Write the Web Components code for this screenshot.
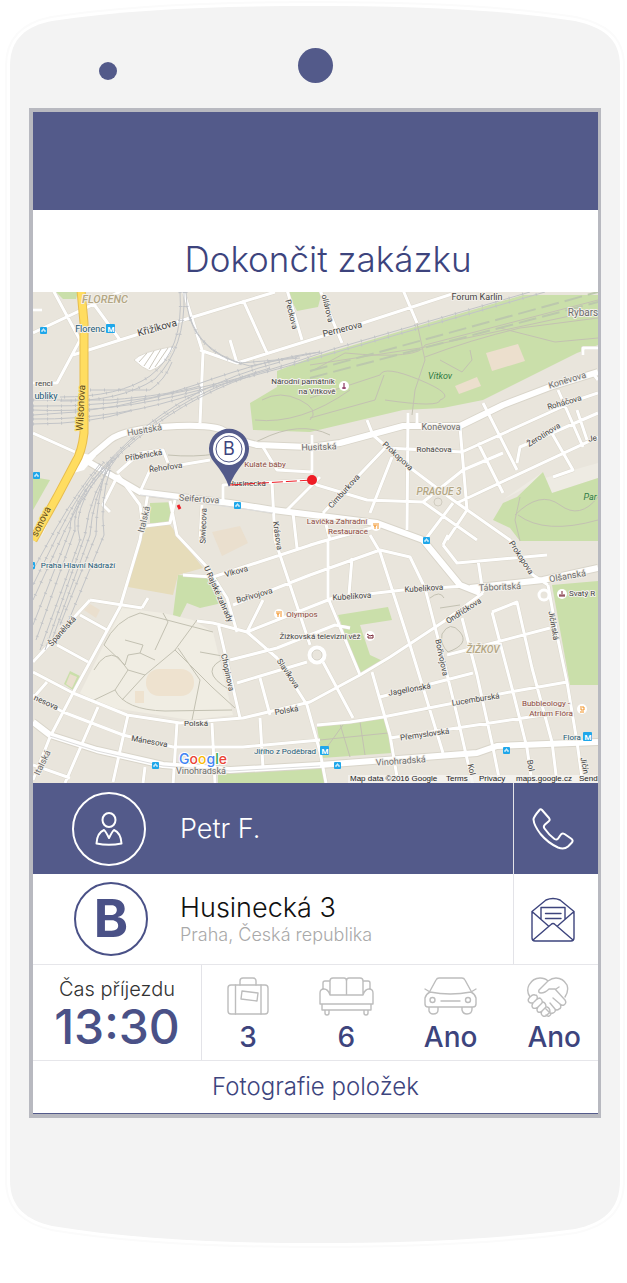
<!DOCTYPE html>
<html lang="cs">
<head>
<meta charset="utf-8">
<meta name="viewport" content="width=device-width, initial-scale=1">
<title>Dokončit zakázku</title>
<style>
  body { margin: 0; background: #fff; font-family: Inter, "Liberation Sans", sans-serif; }
</style>
</head>
<body>
<phone-frame>
  <order-screen></order-screen>
</phone-frame>

<script>
const define = (name, html, setup) => {
  const tpl = document.createElement('template');
  tpl.innerHTML = html;
  customElements.define(name, class extends HTMLElement {
    constructor() {
      super();
      this.attachShadow({ mode: 'open' }).append(tpl.content.cloneNode(true));
    }
    connectedCallback() { if (setup) setup(this, this.shadowRoot); }
  });
};

/* Handset body with sensor, camera and the bezel round the slotted screen */
define('phone-frame', `
<style>
  :host { display: grid; --ink: #535a8a; }
  .shell { grid-area: 1 / 1; width: 100%; height: 0; min-height: 100%; display: block; }
  .device { grid-area: 1 / 1; display: grid; grid-template-rows: 108px auto 165px; padding: 0 26px 0 29px; }
  .top { display: grid; grid-template-columns: 1fr auto 1fr; align-items: start; padding-top: 48px; }
  .sensor { width: 18px; height: 18px; margin: 14px 0 0 70px; border-radius: 50%; background: var(--ink); }
  .camera { width: 35px; height: 35px; border-radius: 50%; background: var(--ink); }
  .bezel { border: 4px solid #b8b9c0; border-right-width: 3px; background: #fff; }
</style>
<svg class="shell" viewBox="0 0 627 1283" preserveAspectRatio="none" aria-hidden="true">
  <path d="M10 66C10 38 27 26 52 21C130 9 220 6 314 6C408 6 500 9 575 21C602 27 620 38 620 66V1180C620 1210 603 1223 575 1229C500 1239 408 1243 314 1243C220 1243 130 1239 52 1226C27 1220 10 1208 10 1180Z" fill="#f3f3f3" stroke="#fbfbfb" stroke-width="10"/>
  <path d="M10 66C10 38 27 26 52 21C130 9 220 6 314 6C408 6 500 9 575 21C602 27 620 38 620 66V1180C620 1210 603 1223 575 1229C500 1239 408 1243 314 1243C220 1243 130 1239 52 1226C27 1220 10 1208 10 1180Z" fill="#f3f3f3" stroke="#fff" stroke-width="6"/>
  <path d="M10 66C10 38 27 26 52 21C130 9 220 6 314 6C408 6 500 9 575 21C602 27 620 38 620 66V1180C620 1210 603 1223 575 1229C500 1239 408 1243 314 1243C220 1243 130 1239 52 1226C27 1220 10 1208 10 1180Z" fill="#f3f3f3"/>
</svg>
<div class="device">
  <div class="top"><div class="sensor"></div><div class="camera"></div></div>
  <div class="bezel"><slot></slot></div>
</div>`);

/* Round badge on the left of a row */
define('round-badge', `
<style>
  :host { display: grid; place-items: center; box-sizing: border-box; width: 74px; height: 74px;
    border: 2px solid currentColor; border-radius: 50%; font-weight: 700; font-size: 52px; line-height: 1; }
</style><slot></slot>`);

/* Row: badge, text and an action button */
define('contact-row', `
<style>
  :host { display: grid; box-sizing: border-box; grid-template-columns: 147px 1fr 85px; align-items: center; height: 91px; border-bottom: 1px solid #e6e6ea; color: #3d447d; }
  :host([dark]) { background: #535a8a; color: #fff; border-bottom: 0; }
  ::slotted([slot=badge]) { margin-left: 40px; }
  .act { display: grid; place-items: center; align-self: stretch; padding: 0 7px 0 0; border: 0; border-left: 1px solid #e3e3e8; background: none; color: inherit; }
</style>
<slot name="badge"></slot>
<div><slot></slot></div>
<button class="act" type="button"><slot name="icon"></slot></button>`,
(host, root) => root.querySelector('button').setAttribute('aria-label', host.getAttribute('action')));

/* Icon above a value */
define('info-item', `
<style>
  :host { display: grid; grid-template-rows: 43px 34px; color: #bdbdbd; }
  .v { color: #3d447d; font-size: 28px; line-height: 34px; font-weight: 500; text-align: center; }
</style>
<slot name="icon"></slot><div class="v"><slot></slot></div>`);

const parks = [
  '277,371 310,358 523,295 598,295 598,345 577,353 543,370 483,400 443,408 403,410 310,432 253,430 250,403 277,387',
  '543,472 552,493 598,478 598,541 520,541 510,528 493,520 503,503 517,497',
  '552,585 598,581 598,685 570,685',
  '178,575 217,578 222,603 200,608 187,603 180,617 173,615',
  '338,615 388,607 392,620 360,625 370,655 385,662 360,675',
  '317,727 385,718 392,753 322,758',
  '218,772 325,767 325,783 218,783',
  '56,292 78,292 76,299 63,299', '287,292 322,292 318,307 297,311',
  '150,503 175,502 168,523 150,523', '33,477 50,480 33,510',
  '64,684 70,671 80,676 73,690'
];
const tans = [
  ['143,526 170,525 203,568 178,575 173,595 128,587', '#e6dcba'],
  ['486,353 518,344 525,361 492,371', '#ecdfcd'],
  ['455,386 477,377 481,386 459,394', '#ecdfcd'],
  ['122,608 163,613 193,620 213,632 233,715 190,720 107,707 80,693', '#f0ede3'],
  ['212,532 240,526 248,543 222,556', '#eadfce'],
  ['66,684 70,674 77,677 72,688', '#eadfce'],
  ['135,691 144,691 144,703 135,703', '#eee2cf'],
  ['84,610 90,604 100,610 96,618', '#eadfce'],
  ['504,499 543,472 552,493 598,478 598,463 545,478', '#eeebe3']
];
const rails = [
  'M33 406Q110 408 190 390T330 350L530 292', 'M33 410Q110 414 200 390T330 354L545 292', 'M33 415Q120 412 195 385T320 352',
  'M33 419Q120 420 200 392', 'M33 424Q90 424 130 411', 'M33 400H110Q170 395 200 386',
  'M180 292Q184 350 150 376Q120 397 60 397', 'M184 292Q186 348 155 379Q120 402 60 401', 'M186 292Q186 352 250 366L320 352', 'M190 317Q200 350 240 363L300 358',
  'M90 390H150Q165 380 172 362',
  'M280 362Q190 385 130 440T75 530L36 640', 'M270 368Q185 392 127 445T70 530L33 625', 'M250 376Q180 400 124 450T80 540L40 650',
  'M122 452Q90 480 65 530L33 600', 'M118 456Q90 490 85 535L45 650', 'M112 460Q92 500 90 535L52 640', 'M108 462Q96 500 96 535L60 625',
  'M104 462Q80 490 60 530L33 585', 'M100 464Q78 490 55 530L33 570', 'M110 470Q100 500 104 535L68 622'
];
const paths = [
  'M310 372L345 353Q420 360 425 345L598 300', 'M310 365L420 348L598 310', 'M417 323L425 360L415 390L412 415', 'M425 357Q470 340 520 328L598 318',
  'M500 328L555 342L598 338', 'M310 398L380 375Q384 365 420 380T440 400Q440 408 385 400', 'M310 418L375 400L384 375', 'M255 420Q300 425 350 390',
  'M440 360L462 372L472 360L470 350', 'M262 400Q280 390 300 400T310 420', 'M168 455Q220 460 260 440T330 435',
  'M520 497L515 520L520 541', 'M515 515Q540 490 560 505T598 497', 'M518 515Q545 535 598 520',
  'M104 645Q115 620 140 613L213 632', 'M104 645L125 665L128 655L140 653L143 645L125 640', 'M163 613L168 622L155 650', 'M94 670Q105 650 118 657L128 670L115 690L90 702',
  'M128 670L145 675L175 650L197 620', 'M115 690Q125 710 165 711L232 710', 'M145 675L122 700', 'M175 650L212 687L235 708', 'M178 648L200 680L192 720', 'M200 652L228 657Q195 670 230 690', 'M140 653L155 660',
  'M320 757L345 722M350 757L340 724M365 755L360 722M320 740L388 733', 'M442 634Q450 620 460 632T448 652Q440 645 442 634', 'M460 605L440 608M444 598Q440 590 430 598'
];
const minor = [
  'M148 493L140 540L120 607L73 693L50 737L33 780', 'M33 695L63 712L123 735L173 747H243L320 740', 'M170 501L177 535L207 567L227 598L237 632',
  'M183 575L213 577L320 542L375 527', 'M233 605L310 575L380 550L410 557L425 588L443 658L457 715L473 785',
  'M197 621L213 623L247 632L333 598L403 590L465 586', 'M247 632L277 658L307 705L320 752L326 783', 'M218 623L240 718', 'M272 482L275 540L280 555L310 645',
  'M263 600L247 632', 'M230 660L277 648L335 625L350 628', 'M237 683L307 662', 'M260 678L270 715', 'M212 723L215 783', 'M177 723L173 785', 'M128 715L113 782', 'M98 707L65 783',
  'M260 718L263 768', 'M145 767L143 783', 'M142 608L148 598M90 600L142 608M90 600L33 662', 'M80 615L107 630', 'M57 645L88 662', 'M47 682L33 698',
  'M328 540V598L360 675', 'M352 558L349 594', 'M370 535L380 552L410 645L443 753', 'M478 560L483 593', 'M462 618L477 675L493 748L500 783',
  'M492 612L517 602L532 668L552 742L557 783', 'M492 612L513 692L527 748L532 783', 'M548 585L557 635L567 682L577 742L583 785', 'M372 672L390 735L398 783',
  'M380 697L473 673', 'M317 725L350 722L383 717L510 692L567 682', 'M390 738L543 715', 'M447 655L550 628', 'M323 662L353 718', 'M443 545L457 563L547 555M443 545L448 535',
  'M373 435L413 470L453 500L510 540L533 575L548 585', 'M385 448L323 513', 'M392 457L370 513', 'M408 413L407 530', 'M417 413V426', 'M460 427L467 510L447 540',
  'M387 448L462 452L577 400L598 393', 'M312 480L317 485L367 500L423 502L463 470L503 453', 'M457 503L598 437', 'M483 403L517 470', 'M478 443L503 493', 'M558 390L583 447',
  'M423 502L477 540M453 503L425 540', 'M517 463L520 447L598 413', 'M550 430L573 470L553 477', 'M367 420L373 435',
  'M200 423L203 353L183 290', 'M200 350L237 363L320 337L455 293', 'M73 355L120 340L193 317L275 292', 'M33 333L130 287', 'M230 340L237 363', 'M243 300L267 353', 'M287 290L302 340',
  'M320 290L342 343', 'M403 290L417 323', 'M93 303L120 340', 'M53 290L80 340L57 383H33', 'M117 473L140 453L163 450L168 463', 'M140 492L150 470L210 460',
  'M263 447L277 470L312 472V435', 'M287 510L320 477', 'M202 505L200 540', 'M175 500L170 523L145 526', 'M293 513L297 548', 'M223 503V485L312 480', 'M33 433L75 452',
  'M33 672L73 693', 'M577 410L587 440M598 380L592 372', 'M583 355V348H598', 'M118 475L103 505L110 512M118 475L140 505L142 520', 'M33 310H42', 'M310 545L328 540', 'M33 765L70 778',
  'M323 513L330 540'
];
const major = [
  'M90 457L110 440Q125 428 177 426T227 437L257 445L310 447L340 443L403 426H460L503 405L550 387L598 372',
  'M80 457L140 492L180 497L230 503L273 510L377 523L423 540L460 585L480 593', 'M470 588L543 580L598 568',
  'M33 722L50 735L97 750L163 765L230 770L320 765L477 753L497 746L598 742'
];
const mid = ['M483 593L443 622L390 657L360 675L310 702L243 718L180 723L127 715L73 693'];

/* text, centre x, baseline y, rotation, size, style */
const labels = [
  ['FLORENC',105,303,0,11,'d'], ['Florenc',90,332,0,9,'m'], ['Křižíkova',158,331,-16,10], ['Peckova',289,315,76,8], ['ollárova',325,309,76,8], ['Pernerova',343,332,-14,9],
  ['Forum Karlín',477,300,0,9], ['Rybars',583,316,0,10,'g'], ['Vítkov',440,379,0,9,'p'], ['renci',44,386,0,8], ['ubliky',46,399,0,9,'m'], ['Národní památník',303,384,0,8], ['na Vítkově',317,394,0,8],
  ['Wilsonova',84,408,-87,10,'y'], ['sonova',44,523,-64,10,'y'], ['Husitská',145,433,-10,9,'g'], ['Husitská',319,450,-2,9,'g'], ['Koněvova',441,430,0,9,'g'], ['Koněvova',568,383,-17,9,'g'],
  ['Roháčova',434,452,0,8], ['Roháčova',565,405,-16,8], ['Žerotínova',545,437,-32,8], ['Je',593,441,-10,8], ['Příběnická',144,458,-10,8], ['Řehořova',166,470,-8,8], ['Kulaté báby',265,467,0,8,'r'],
  ['Husinecká',247,486,0,8], ['Prokopova',396,458,43,8], ['Cimburkova',346,493,-48,8], ['PRAGUE 3',439,495,0,10,'d'], ['Seifertova',199,502,4,9,'g'], ['Italská',147,520,-76,9,'g'],
  ['Siwiecova',206,526,-88,8], ['Krásova',275,536,82,8], ['Lavička Zahradní',337,524,0,8,'r'], ['Restaurace',348,534,0,8,'r'], ['Par',590,500,0,9,'p'],
  ['Praha Hlavní Nádraží',78,568,0,8,'m'], ['Vlkova',237,574,-16,8], ['Bořivojova',255,598,-16,8], ['U Rajské zahrady',216,595,66,8], ['Olympos',302,617,0,8,'r'], ['Žižkovská televizní věž',320,639,0,8],
  ['Španělská',64,633,-48,8], ['Chopinova',225,673,78,8], ['Slavíkova',286,675,56,8], ['Polská',196,726,0,8], ['Polská',287,713,-10,8], ['Mánesova',149,744,10,8], ['nesova',45,705,24,8],
  ['Italská',45,764,-64,9,'g'], ['Vinohradská',201,774,0,9,'g'], ['Vinohradská',401,764,-4,9,'g'], ['Jiřího z Poděbrad',285,754,0,8,'m'], ['Prokopova',519,559,57,8], ['Kubelíkova',352,599,-4,8],
  ['Kubelíkova',424,591,-4,8], ['Táboritská',500,590,-3,9,'g'], ['Olšanská',568,579,-10,9,'g'], ['Svatý R',582,596,0,8], ['Ondříčkova',465,613,-33,8], ['Jičínská',551,626,80,8], ['Bořivojova',439,658,78,8],
  ['ŽIŽKOV',483,653,0,10,'d'], ['Jagellonská',410,692,-10,8], ['Lucemburská',476,702,-9,8], ['Přemyslovská',425,737,-8,8], ['Bubbleology -',546,706,0,8,'r'], ['Atrium Flóra',551,716,0,8,'r'], ['Flora',572,740,0,8,'m'],
  ['Jičín',582,766,80,8], ['Kol',469,770,78,8], ['Bol',528,766,80,8]
];
const centre = ([x, y]) => `<g transform="translate(${x} ${y})">`;
const line = (list, colour, w, dash = 'none') => `<path d="${list.join('')}" fill="none" stroke="${colour}" stroke-width="${w}" stroke-linejoin="round" stroke-dasharray="${dash}"/>`;
const metro = [[111, 329], [325, 751], [588, 737]].map(p => centre(p) + '<rect x="-5" y="-5" width="9" height="9" rx="1" fill="#1fa7ea"/><text x="0" y="3" fill="#fff" font-size="8" font-weight="700">M</text></g>').join('');
const stops = [[43, 330], [36, 475], [237, 505], [426, 540], [155, 765], [337, 765], [506, 750], [31, 565]].map(p => centre(p) + '<rect x="-3" y="-3" width="7" height="7" rx="1" fill="#1fa7ea"/><path d="M-1 2V0H2V2M0-1H1" stroke="#fff" fill="none"/></g>').join('');
const pois = [[344, 386, '#714', 'M0-3V3M-2 2H2'], [376, 526, '#f29224', 'M-2-3V0H0V-3M-1 0V3M2-3V3'], [279, 614, '#f29224', 'M-2-3V0H0V-3M-1 0V3M2-3V3'], [370, 636, '#723', 'M-3-2L0 0 3-1V2H-2V0'], [562, 594, '#723', 'M-3 2H3M0-3V2M-2 0V2M2 0V2'], [582, 709, '#f29224', 'M-2-2H2V1H-1V-1M-2 3H2']]
  .map(p => centre(p) + `<circle r="5" fill="#fff"/><path d="${p[3]}" stroke="${p[2]}" fill="none"/></g>`).join('');

define('city-map', `
<style>
  :host { display: block; background: #e9e5dc; }
  svg { display: block; width: 100%; height: auto; }
  text { font-family: Roboto, "Open Sans", sans-serif; text-anchor: middle; }
  .l { fill: #444; stroke: #f2efe9; stroke-width: 2px; paint-order: stroke; stroke-linejoin: round; }
  .d { fill: #b3a683; font-weight: 500; font-style: italic; }
  .m { fill: #1b5a78; }
  .g { fill: #6c6c6c; }
  .p { fill: #2f7a45; font-style: italic; stroke: #cadfaa; }
  .r { fill: #8c4a42; }
  .y { fill: #5f4a15; stroke: #ffe070; }
  .legal { fill: #222; text-anchor: start; font-family: "Liberation Sans", sans-serif; font-size: 8px; }
  .logo { font-family: Inter, sans-serif; font-weight: 500; font-size: 14px; stroke: #fff; stroke-width: 2px; paint-order: stroke; }
</style>
<svg viewBox="33 292 565 491" role="img" aria-label="Mapa, Husinecká 3">
  ${tans.slice(3, 4).concat(tans.slice(8)).map(t => `<polygon points="${t[0]}" fill="${t[1]}"/>`).join('')}
  ${parks.map(p => `<polygon points="${p}" fill="#cadfaa"/>`).join('')}
  ${tans.filter((t, i) => i !== 3 && i !== 8).map(t => `<polygon points="${t[0]}" fill="${t[1]}"/>`).join('')}
  <rect x="146" y="669" width="48" height="27" rx="13" fill="#eee2cf"/>
  ${line(paths, '#c3c1b2', 1)}
  <path d="M310 371L598 292M310 378L598 302" stroke="#bcc8ad" stroke-width="2" stroke-dasharray="18 6" fill="none"/>
  <path d="M134 360Q140 352 175 346Q165 366 150 371Q142 368 134 360Z" fill="#fff" stroke="#ddd9cf"/>
  <path d="M139 362L147 353M144 366L154 351M149 369L161 349M155 367L168 348" stroke="#ccc8bd" fill="none"/>
  ${line(minor, '#dcd8cd', 4)}${line(mid, '#dcd8cd', 4)}${line(major, '#d9d5ca', 8)}
  ${line(minor, '#fff', 3)}${line(mid, '#fff', 3)}${line(major, '#fff', 6)}
  ${line(rails, '#c2c4c7', 1)}${line(rails, '#c2c4c7', 3, '1 13')}
  <path d="M75 452L96 456L84 470L70 474L40 540" fill="#fff"/>
  <path d="M140 495L180 500L273 513M50 736L97 751L163 766L230 771L320 766" fill="none" stroke="#ddd"/>
  <path d="M81 290L84 323V433Q82 452 75 463L57 497L33 540" fill="none" stroke="#e7bd4d" stroke-width="9"/>
  <path d="M81 290L84 323V433Q82 452 75 463L57 497L33 540" fill="none" stroke="#ffdd60" stroke-width="7"/>
  <circle cx="317" cy="655" r="7" fill="none" stroke="#fff" stroke-width="5"/><circle cx="317" cy="655" r="5" fill="none" stroke="#d0ccc0"/>
  <circle cx="438" cy="502" r="4" fill="none" stroke="#d0ccc0"/>
  <circle cx="544" cy="595" r="5" fill="none" stroke="#fff" stroke-width="3"/>
  ${labels.map(l => `<text class="l ${l[5] || ''}" font-size="${l[4]}" transform="translate(${l[1]} ${l[2]}) rotate(${l[3]})">${l[0]}</text>`).join('')}
  ${metro}${stops}${pois}
  <text class="logo" x="203" y="764"><tspan fill="#4285f4">G</tspan><tspan fill="#ea4335">o</tspan><tspan fill="#fbbc05">o</tspan><tspan fill="#4285f4">g</tspan><tspan fill="#34a853">l</tspan><tspan fill="#ea4335">e</tspan></text>
  <rect x="348" y="775" width="250" height="8" fill="#f5f4f1" opacity=".8"/>
  <text class="legal" x="350" y="781">Map data ©2016 Google</text>
  <a href="#terms"><text class="legal" x="446" y="781">Terms</text></a>
  <a href="#privacy"><text class="legal" x="479" y="781">Privacy</text></a>
  <a href="#maps"><text class="legal" x="516" y="781">maps.google.cz</text></a>
  <a href="#report"><text class="legal" x="579" y="781">Send</text></a>
  <path d="M178 505L180 509" stroke="#ee1c25" stroke-width="3"/>
  <path d="M230 485L312 480" stroke="#ee1c25" stroke-width="1" stroke-dasharray="11 3"/>
  <circle cx="312" cy="480" r="5" fill="#ee1c25"/>
  <path d="M229 487Q225 475 214 462A20 20 0 1 1 244 462Q233 475 229 487Z" fill="#535a8a"/>
  <circle cx="229" cy="449" r="16" fill="#fff"/><circle cx="229" cy="449" r="13" fill="#fff" stroke="#535a8a"/>
  <text x="229" y="455" font-size="18" fill="#3d447d" style="font-family:Inter,sans-serif">B</text>
</svg>`);

define('order-screen', `
<style>
  :host { display: block; color: #3d447d; }
  .bar { height: 98px; background: #535a8a; }
  h1 { margin: 0; padding: 16px 0 0 25px; height: 66px; line-height: 66px; font-size: 35px; font-weight: 340; text-align: center; }
  .name { font-size: 27px; line-height: 34px; font-weight: 340; }
  .street { color: #111; font-size: 27px; line-height: 32px; font-weight: 340; }
  .city { color: #a9a9a9; font-size: 18px; line-height: 22px; font-weight: 300; }
  .info { display: grid; grid-template-columns: 169px 1fr; height: 95px; border-bottom: 1px solid #e6e6ea; }
  .time { border-right: 1px solid #e3e3e8; text-align: center; padding-top: 12px; }
  .time span { display: block; color: #333; font-size: 20px; line-height: 24px; font-weight: 300; }
  .time time { display: block; font-size: 48px; line-height: 52px; font-weight: 500; color: #4a5187; }
  .items { display: flex; justify-content: space-between; padding: 12px 17px 0 25px; }
  .photos { display: block; width: 100%; height: 53px; border: 0; border-bottom: 1px solid #535a8a; padding: 0; background: none; color: inherit; font: 340 24px/52px Inter, "Liberation Sans", sans-serif; }
  svg { display: block; fill: none; stroke: currentColor; stroke-width: 2; stroke-linejoin: round; stroke-linecap: round; }
  .thin { stroke-width: 1.4; }
  .badge-b { color: #4a5187; margin-left: 41px; }
  .badge-p { margin-left: 39px; }
</style>
<header class="bar"></header>
<h1>Dokončit zakázku</h1>
<city-map></city-map>
<contact-row dark action="Zavolat">
  <round-badge slot="badge" class="badge-p"><svg width="28" height="34" viewBox="0 0 28 34"><ellipse cx="14" cy="8" rx="6.5" ry="7"/><path d="M9 18Q2 21 1.500 31.500Q14 34 26.500 31.500Q26 21 19 18Q17.500 19 14 26Q10.500 19 9 18Z"/></svg></round-badge>
  <div class="name">Petr F.</div>
  <svg slot="icon" width="44" height="44" viewBox="0 0 44 44"><path d="M11 3L18 11Q19.500 13 17.500 14.500L14 17.500Q12 19.500 13.500 21.500Q18 28 23.500 32Q26 33.500 27.500 31L29.500 28Q31 25.500 33.500 27L40 31.500Q43 33.500 40.500 36L37 39.500Q33 43 27 40.500Q17 36 9.500 27Q3 18.500 2.500 12.500Q2.500 10 8.500 3Q9.500 1.500 11 3Z"/></svg>
</contact-row>
<contact-row action="Napsat zprávu">
  <round-badge slot="badge" class="badge-b">B</round-badge>
  <div class="street">Husinecká 3</div>
  <div class="city">Praha, Česká republika</div>
  <svg slot="icon" class="thin" width="44" height="45" viewBox="0 0 44 45"><path d="M1 14.500L15 3Q22 0 29 3L43 14.500V41Q43 44 40 44H4Q1 44 1 41ZM1 14.500L17.500 29M43 14.500L26.500 29M2 43L20 27.500Q22 25.500 24 27.500L42 43M10 22V10.500H34V22M14.500 16.500H30M14.500 21.500H30"/></svg>
</contact-row>
<section class="info">
  <div class="time"><span>Čas příjezdu</span><time>13:30</time></div>
  <div class="items">
    <info-item><svg slot="icon" class="thin" width="42" height="38" viewBox="0 0 42 38"><rect x="1" y="8" width="40" height="29" rx="3"/><path d="M13 8V4Q13 1 16 1H26Q29 1 29 4V8M8.500 8V37M34 8V37M15 14L31 16L30 24L14 22Z"/></svg>3</info-item>
    <info-item><svg slot="icon" class="thin" width="55" height="39" viewBox="0 0 55 39"><path d="M11 18V4Q11 1 14 1H25Q27.500 1 27.500 4Q27.500 1 30 1H41Q44 1 44 4V18M27.500 4V18M11 4H6Q4 4 4 6V12M44 4H49Q51 4 51 6V12M1 27V16Q1 12 5 12Q9 12 11 18H44Q46 12 50 12Q54 12 54 16V27ZM3 27V33H52V27M6 33V36Q6 38 8 38Q10 38 10 36V33M45 33V36Q45 38 47 38Q49 38 49 36V33"/></svg>6</info-item>
    <info-item><svg slot="icon" class="thin" width="53" height="39" viewBox="0 0 53 39"><path d="M6 14L12 3Q13 1 15 1H38Q40 1 41 3L47 14M1 12L6 15Q2 17 1 21V27Q1 30 4 30H49Q52 30 52 27V21Q51 17 47 15L52 12M6 15Q26 19 47 15M5 30V34Q6 37 9 37Q14 37 14 33V30M38 30V33Q39 37 43 37Q48 37 48 32V30M17 24H36"/><circle cx="8.500" cy="23" r="2.500"/><circle cx="44" cy="23" r="2.500"/></svg>Ano</info-item>
    <info-item><svg slot="icon" class="thin" width="42" height="41" viewBox="0 0 42 41"><path d="M3 20Q-1 14 2 8Q6 1 13 1Q18 1 21 4Q25 1 29 1Q36 1 40 8Q42 14 38 20M21 4L12 13Q11 16 14 16Q18 16 22 12L28 12L38 23Q40 26 37 28Q35 29 33 27L26 21M33 27Q35 31 32 32Q30 34 28 32L23 26M28 32Q29 35 26 36Q24 37 22 35L19 32M22 35L24 37Q22 41 19 38M3 20Q0 23 2 25Q4 27 7 25L10 22Q11 18 8 18Q6 17 3 20M6 26Q4 29 6 31Q9 32 11 30L15 26Q16 23 13 21Q11 21 9 23M11 30Q9 33 11 35Q13 36 15 34L19 30Q19 26 16 25M15 34Q13 37 16 39Q18 40 20 38L23 35Q23 31 20 30M29 12L32 10"/></svg>Ano</info-item>
  </div>
</section>
<button class="photos" type="button">Fotografie položek</button>`);
</script>
</body>
</html>
